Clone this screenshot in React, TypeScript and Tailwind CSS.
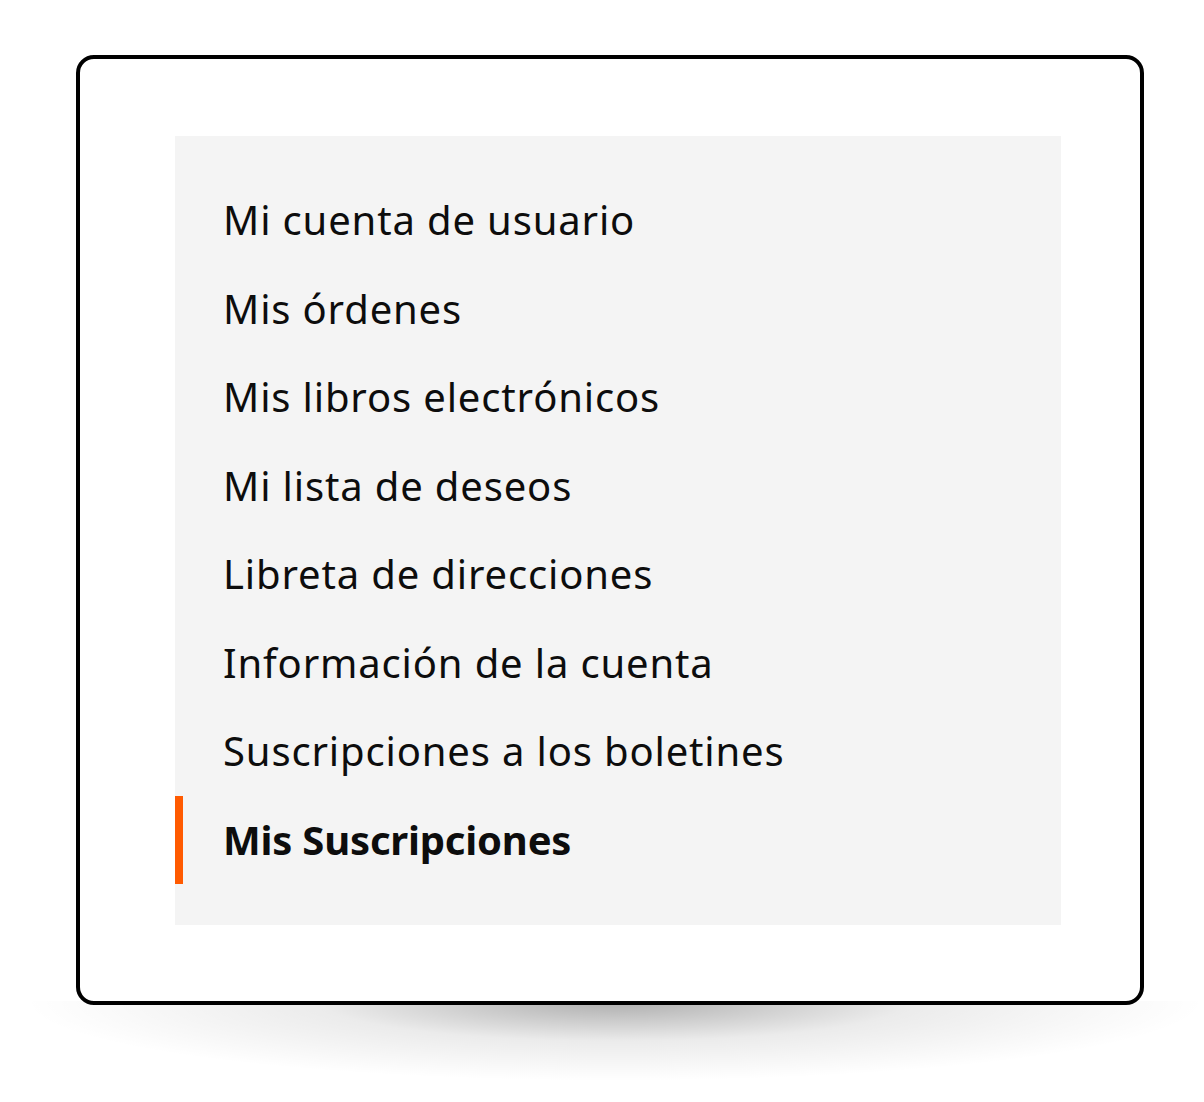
const ITEMS = [
  "Mi cuenta de usuario",
  "Mis órdenes",
  "Mis libros electrónicos",
  "Mi lista de deseos",
  "Libreta de direcciones",
  "Información de la cuenta",
  "Suscripciones a los boletines",
  "Mis Suscripciones",
];

const ACTIVE = "Mis Suscripciones";

export default function App() {
  return (
    <div className="min-h-[1102px] bg-white pt-[55px] pl-[76px]">
      <div className="relative z-10 w-[1068px] h-[950px] rounded-[18px] border-4 border-black bg-white pt-[77px] pl-[95px]">
        <nav className="w-[886px] h-[789px] bg-[#f4f4f4] py-[40px] font-['Noto_Sans',sans-serif]">
          <ul>
            {ITEMS.map((item) => {
              const active = item === ACTIVE;
              return (
                <li
                  key={item}
                  className={
                    active
                      ? "flex items-center h-[88.5px] pl-[40px] border-l-8 border-[#ff5a00] text-[40px] font-bold tracking-[-0.2px] text-[#0d0d0d]"
                      : "flex items-center h-[88.5px] pl-[48px] text-[40px] tracking-[0.85px] text-[#0d0d0d]"
                  }
                >
                  {item}
                </li>
              );
            })}
          </ul>
        </nav>
      </div>
      {/* soft lifted shadow under the card */}
      <div className="-mt-[4px] -ml-[76px] w-[1230px] h-[80px] bg-[radial-gradient(ellipse_48%_100%_at_50%_0%,rgba(0,0,0,0.32),rgba(0,0,0,0.08)_50%,transparent_100%)]" />
    </div>
  );
}
